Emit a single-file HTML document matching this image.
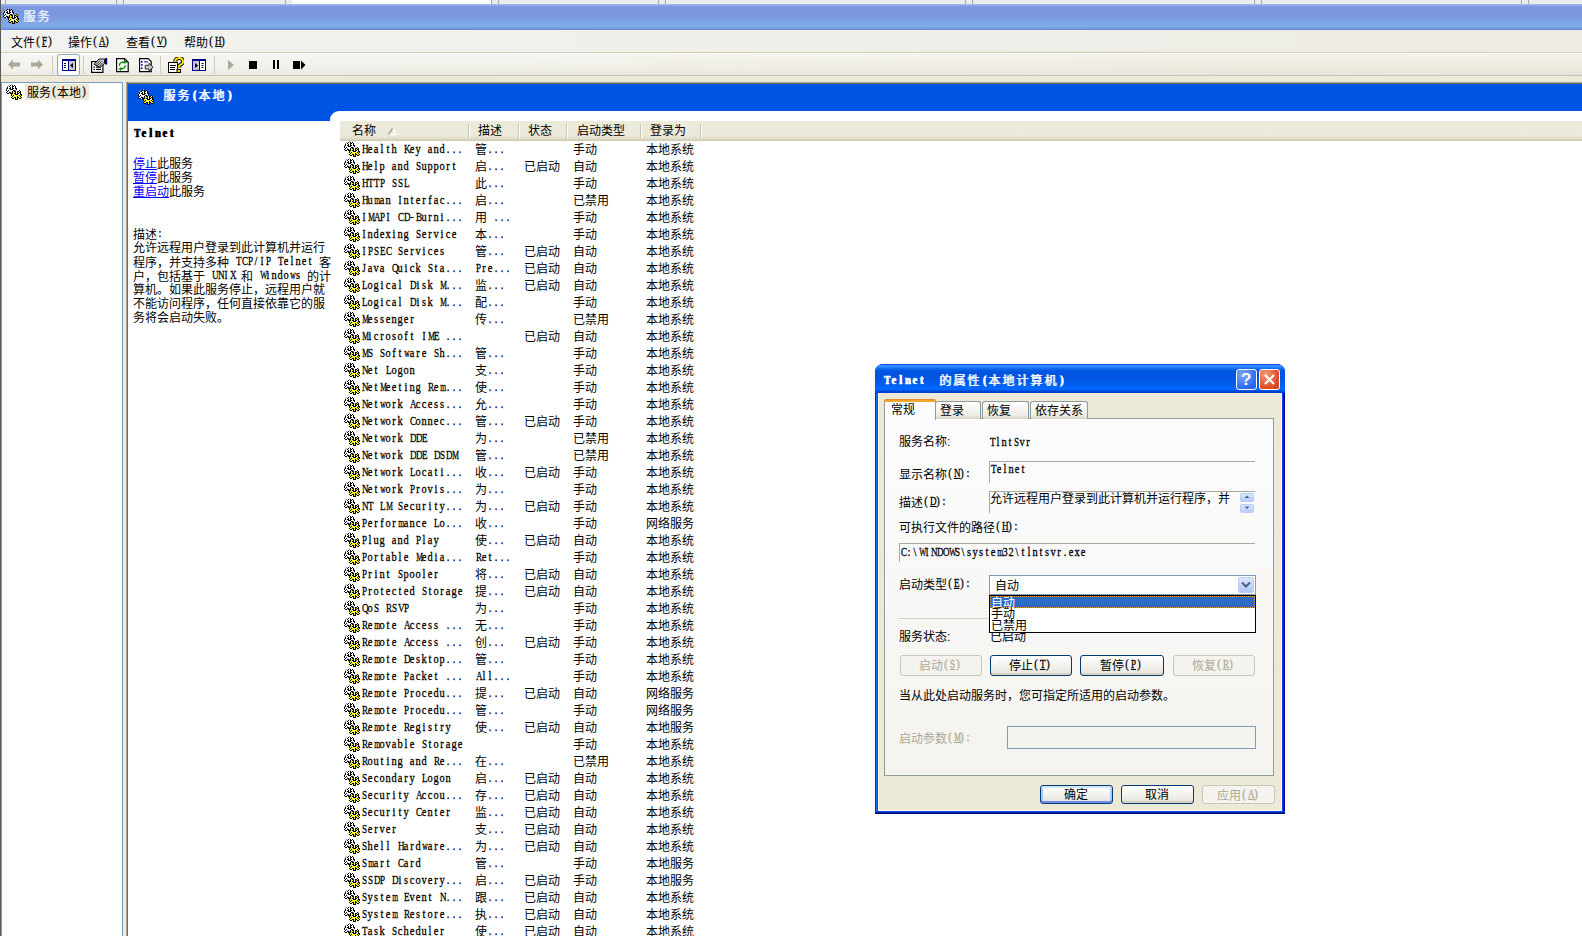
<!DOCTYPE html>
<html lang="zh-CN"><head><meta charset="utf-8"><title>服务</title><style>
*{margin:0;padding:0;box-sizing:border-box}
html,body{width:1582px;height:936px;overflow:hidden;background:#fff}
body{position:relative;font-family:"Liberation Sans",sans-serif;font-size:12px;line-height:14px;color:#000}
.a{position:absolute;white-space:nowrap}
i{font-style:normal;font-family:"Liberation Mono",monospace;font-size:12px;letter-spacing:-1.2px;vertical-align:1px}
b i,.bd i{letter-spacing:-0.2px}
.bd{letter-spacing:2px;text-shadow:1px 0 0}
.r i{vertical-align:0}
b i{font-weight:bold}
.g{position:absolute;display:block}
u{text-decoration:underline}
c{display:inline-block;width:6px;text-align:center;font-family:"Liberation Serif",serif;font-size:13px;letter-spacing:0;transform:scaleX(.8);-webkit-text-stroke-width:.3px;position:relative;top:-1px}
.bd c{width:7px;top:0;font-weight:bold}
c.u{transform:scaleX(.7)}
c.w{transform:scaleX(.58)}
</style></head><body>
<svg width="0" height="0" style="position:absolute"><defs><symbol id="gear" viewBox="0 0 16 16" shape-rendering="crispEdges"><rect x="5" y="0" width="1" height="1" fill="#A0A0A0"/><rect x="2" y="1" width="1" height="1" fill="#A0A0A0"/><rect x="4" y="1" width="1" height="1" fill="#000"/><rect x="6" y="1" width="1" height="1" fill="#000"/><rect x="8" y="1" width="1" height="1" fill="#000"/><rect x="1" y="2" width="1" height="1" fill="#A0A0A0"/><rect x="3" y="2" width="1" height="1" fill="#000"/><rect x="4" y="2" width="2" height="1" fill="#fff"/><rect x="6" y="2" width="2" height="1" fill="#000"/><rect x="8" y="2" width="1" height="1" fill="#fff"/><rect x="9" y="2" width="1" height="1" fill="#000"/><rect x="1" y="3" width="1" height="1" fill="#000"/><rect x="2" y="3" width="2" height="1" fill="#fff"/><rect x="4" y="3" width="1" height="1" fill="#000"/><rect x="5" y="3" width="1" height="1" fill="#fff"/><rect x="6" y="3" width="1" height="1" fill="#000"/><rect x="7" y="3" width="2" height="1" fill="#fff"/><rect x="9" y="3" width="1" height="1" fill="#000"/><rect x="0" y="4" width="1" height="1" fill="#A0A0A0"/><rect x="1" y="4" width="1" height="1" fill="#000"/><rect x="2" y="4" width="1" height="1" fill="#fff"/><rect x="3" y="4" width="2" height="1" fill="#000"/><rect x="5" y="4" width="1" height="1" fill="#fff"/><rect x="6" y="4" width="2" height="1" fill="#000"/><rect x="8" y="4" width="1" height="1" fill="#fff"/><rect x="9" y="4" width="2" height="1" fill="#000"/><rect x="0" y="5" width="1" height="1" fill="#000"/><rect x="1" y="5" width="3" height="1" fill="#fff"/><rect x="4" y="5" width="3" height="1" fill="#000"/><rect x="7" y="5" width="3" height="1" fill="#fff"/><rect x="10" y="5" width="1" height="1" fill="#000"/><rect x="0" y="6" width="1" height="1" fill="#000"/><rect x="1" y="6" width="1" height="1" fill="#fff"/><rect x="2" y="6" width="1" height="1" fill="#000"/><rect x="3" y="6" width="4" height="1" fill="#fff"/><rect x="7" y="6" width="2" height="1" fill="#000"/><rect x="9" y="6" width="1" height="1" fill="#A0A0A0"/><rect x="13" y="6" width="1" height="1" fill="#000"/><rect x="1" y="7" width="1" height="1" fill="#000"/><rect x="2" y="7" width="1" height="1" fill="#fff"/><rect x="3" y="7" width="1" height="1" fill="#A0A0A0"/><rect x="4" y="7" width="2" height="1" fill="#fff"/><rect x="6" y="7" width="1" height="1" fill="#000"/><rect x="7" y="7" width="1" height="1" fill="#F8F000"/><rect x="8" y="7" width="2" height="1" fill="#000"/><rect x="10" y="7" width="1" height="1" fill="#fff"/><rect x="11" y="7" width="2" height="1" fill="#000"/><rect x="13" y="7" width="1" height="1" fill="#F8F000"/><rect x="14" y="7" width="1" height="1" fill="#000"/><rect x="0" y="8" width="1" height="1" fill="#000"/><rect x="1" y="8" width="2" height="1" fill="#fff"/><rect x="3" y="8" width="2" height="1" fill="#000"/><rect x="5" y="8" width="1" height="1" fill="#A0A0A0"/><rect x="6" y="8" width="1" height="1" fill="#000"/><rect x="7" y="8" width="2" height="1" fill="#F8F000"/><rect x="9" y="8" width="1" height="1" fill="#000"/><rect x="10" y="8" width="1" height="1" fill="#fff"/><rect x="11" y="8" width="1" height="1" fill="#000"/><rect x="12" y="8" width="1" height="1" fill="#F8F000"/><rect x="13" y="8" width="2" height="1" fill="#000"/><rect x="1" y="9" width="2" height="1" fill="#000"/><rect x="3" y="9" width="1" height="1" fill="#fff"/><rect x="4" y="9" width="3" height="1" fill="#000"/><rect x="7" y="9" width="1" height="1" fill="#F8F000"/><rect x="8" y="9" width="2" height="1" fill="#000"/><rect x="10" y="9" width="1" height="1" fill="#fff"/><rect x="11" y="9" width="2" height="1" fill="#000"/><rect x="13" y="9" width="1" height="1" fill="#fff"/><rect x="14" y="9" width="1" height="1" fill="#000"/><rect x="5" y="10" width="1" height="1" fill="#000"/><rect x="6" y="10" width="2" height="1" fill="#F8F000"/><rect x="8" y="10" width="1" height="1" fill="#fff"/><rect x="9" y="10" width="3" height="1" fill="#000"/><rect x="12" y="10" width="1" height="1" fill="#fff"/><rect x="13" y="10" width="1" height="1" fill="#F8F000"/><rect x="14" y="10" width="2" height="1" fill="#000"/><rect x="5" y="11" width="1" height="1" fill="#000"/><rect x="6" y="11" width="1" height="1" fill="#F8F000"/><rect x="7" y="11" width="1" height="1" fill="#000"/><rect x="8" y="11" width="1" height="1" fill="#F8F000"/><rect x="9" y="11" width="1" height="1" fill="#fff"/><rect x="10" y="11" width="1" height="1" fill="#F8F000"/><rect x="11" y="11" width="1" height="1" fill="#fff"/><rect x="12" y="11" width="1" height="1" fill="#F8F000"/><rect x="13" y="11" width="1" height="1" fill="#000"/><rect x="14" y="11" width="1" height="1" fill="#F8F000"/><rect x="15" y="11" width="1" height="1" fill="#000"/><rect x="6" y="12" width="1" height="1" fill="#000"/><rect x="7" y="12" width="3" height="1" fill="#F8F000"/><rect x="10" y="12" width="1" height="1" fill="#fff"/><rect x="11" y="12" width="1" height="1" fill="#000"/><rect x="12" y="12" width="2" height="1" fill="#F8F000"/><rect x="14" y="12" width="1" height="1" fill="#000"/><rect x="5" y="13" width="1" height="1" fill="#000"/><rect x="6" y="13" width="2" height="1" fill="#F8F000"/><rect x="8" y="13" width="2" height="1" fill="#000"/><rect x="10" y="13" width="1" height="1" fill="#F8F000"/><rect x="11" y="13" width="2" height="1" fill="#000"/><rect x="13" y="13" width="2" height="1" fill="#F8F000"/><rect x="15" y="13" width="1" height="1" fill="#000"/><rect x="6" y="14" width="2" height="1" fill="#000"/><rect x="9" y="14" width="1" height="1" fill="#000"/><rect x="10" y="14" width="1" height="1" fill="#F8F000"/><rect x="11" y="14" width="1" height="1" fill="#000"/><rect x="13" y="14" width="2" height="1" fill="#000"/><rect x="9" y="15" width="3" height="1" fill="#000"/></symbol></defs></svg>
<div class="a" style="left:0;top:0;width:1582px;height:4px;background:#EBEBEB"></div>
<div class="a" style="left:292px;top:0;width:199px;height:4px;background:#fff"></div>
<div class="a" style="left:5px;top:0;width:1px;height:4px;background:#A8A8A8"></div>
<div class="a" style="left:116px;top:0;width:1px;height:4px;background:#A8A8A8"></div>
<div class="a" style="left:123px;top:0;width:1px;height:4px;background:#A8A8A8"></div>
<div class="a" style="left:285px;top:0;width:1px;height:4px;background:#A8A8A8"></div>
<div class="a" style="left:491px;top:0;width:1px;height:4px;background:#A8A8A8"></div>
<div class="a" style="left:498px;top:0;width:1px;height:4px;background:#A8A8A8"></div>
<div class="a" style="left:658px;top:0;width:1px;height:4px;background:#A8A8A8"></div>
<div class="a" style="left:665px;top:0;width:1px;height:4px;background:#A8A8A8"></div>
<div class="a" style="left:965px;top:0;width:1px;height:4px;background:#A8A8A8"></div>
<div class="a" style="left:972px;top:0;width:1px;height:4px;background:#A8A8A8"></div>
<div class="a" style="left:1254px;top:0;width:1px;height:4px;background:#A8A8A8"></div>
<div class="a" style="left:1261px;top:0;width:1px;height:4px;background:#A8A8A8"></div>
<div class="a" style="left:1521px;top:0;width:1px;height:4px;background:#A8A8A8"></div>
<div class="a" style="left:1528px;top:0;width:1px;height:4px;background:#A8A8A8"></div>
<div class="a" style="left:0;top:4px;width:1582px;height:26px;background:linear-gradient(#A6BDEE 0px,#94AEE8 1px,#7C98DF 3px,#7A97DE 12px,#7FA7E6 19px,#80ABE8 23px,#6E8DDA 25px,#6A88D8 26px)"></div>
<svg class="g" style="left:3px;top:8px" width="16" height="16" viewBox="0 0 16 16"><use href="#gear"/></svg>
<div class="a bd" style="left:23px;top:10px;color:#E6EDFA">服务</div>
<div class="a" style="left:0;top:30px;width:1582px;height:22px;background:linear-gradient(90deg,#F2F2F0,#EDEBE3)"></div>
<div class="a" style="left:11px;top:35px">文件<i><c>(</c><c class=u><u>F</u></c><c>)</c></i></div>
<div class="a" style="left:68px;top:35px">操作<i><c>(</c><c class=u><u>A</u></c><c>)</c></i></div>
<div class="a" style="left:126px;top:35px">查看<i><c>(</c><c class=u><u>V</u></c><c>)</c></i></div>
<div class="a" style="left:184px;top:35px">帮助<i><c>(</c><c class=u><u>H</u></c><c>)</c></i></div>
<div class="a" style="left:0;top:52px;width:1582px;height:1px;background:#D5CDB5"></div>
<div class="a" style="left:0;top:53px;width:1582px;height:1px;background:#FFFFFF"></div>
<div class="a" style="left:0;top:54px;width:1582px;height:21px;background:linear-gradient(rgba(255,255,255,.35),rgba(255,255,255,0) 70%,rgba(0,0,0,.03)),linear-gradient(90deg,#F2F1EC,#ECE9DD)"></div>
<div class="a" style="left:0;top:75px;width:1582px;height:1px;background:#C9C4B0"></div>
<div class="a" style="left:0;top:76px;width:1582px;height:6px;background:#ECE9D8"></div>
<div class="a" style="left:0;top:0;width:1px;height:936px;background:#5A5A5A"></div>
<svg class="g" style="left:8px;top:59px" width="12" height="11" viewBox="0 0 12 11"><path d="M0 5.5L5 0.5V3.5H12V7.5H5V10.5Z" fill="#ACA899"/></svg>
<svg class="g" style="left:31px;top:59px" width="12" height="11" viewBox="0 0 12 11"><path d="M12 5.5L7 0.5V3.5H0V7.5H7V10.5Z" fill="#ACA899"/></svg>
<div class="a" style="left:52px;top:56px;width:1px;height:18px;background:#D1CCB8"></div>
<div class="a" style="left:83px;top:56px;width:1px;height:18px;background:#D1CCB8"></div>
<div class="a" style="left:160px;top:56px;width:1px;height:18px;background:#D1CCB8"></div>
<div class="a" style="left:214px;top:56px;width:1px;height:18px;background:#D1CCB8"></div>
<div class="a" style="left:57px;top:54px;width:23px;height:22px;background:#fff;border:1px solid #8FA8C9;border-radius:3px"></div>
<svg class="g" style="left:62px;top:59px" width="14" height="12" viewBox="0 0 14 12"><rect x="0.5" y="0.5" width="13" height="11" fill="#C8C8C8" stroke="#00008B" stroke-width="1"/><rect x="1" y="2" width="5" height="9" fill="#fff"/><rect x="0" y="0" width="14" height="2" fill="#00008B"/><rect x="6" y="2" width="1" height="9" fill="#00008B"/><rect x="2" y="4" width="2" height="1" fill="#000"/><rect x="2" y="6" width="2" height="1" fill="#000"/><rect x="2" y="8" width="2" height="1" fill="#000"/><path d="M8 6.5L11 4V9Z" fill="#000"/></svg>
<svg class="g" style="left:91px;top:57px" width="17" height="16" viewBox="0 0 17 16"><rect x="0.6" y="4.6" width="11.3" height="10.8" fill="#fff" stroke="#000" stroke-width="1.2"/><rect x="2.5" y="9.5" width="1.5" height="1.2" fill="#000"/><rect x="5" y="9.5" width="5" height="1.2" fill="#000"/><rect x="2.5" y="11.8" width="1.5" height="1.2" fill="#000"/><rect x="5" y="11.8" width="5" height="1.2" fill="#000"/><path d="M3 7.2L8 2H13.5V6.5L9 10.5Z" fill="#C8C8C8" stroke="#000" stroke-width="0.9"/><path d="M4.5 8L9 3.5M6 9L10.5 4.5M7.5 10L12 5.5" stroke="#000" stroke-width="0.7"/><rect x="14" y="1" width="2.2" height="6.5" fill="#000080"/></svg>
<svg class="g" style="left:116px;top:58px" width="13" height="15" viewBox="0 0 13 15"><path d="M0.6 0.6H8.5L12.2 4.3V13.6H0.6Z" fill="#fff" stroke="#000" stroke-width="1.2"/><path d="M8.5 0.6V3.5H12" fill="none" stroke="#000" stroke-width=".8"/><path d="M3.6 7.8A2.8 2.8 0 0 1 8 4.9M9.2 7.2A2.8 2.8 0 0 1 4.8 10" fill="none" stroke="#008A00" stroke-width="1.3"/><path d="M7 3.5h1.4v-1h1v1h1.2v1.2h-1.2v1h-1v-1H7z M2.6 10.5h1.3v-1h1v1h1.2v1.2H4.9v1h-1v-1H2.6z" fill="#008A00"/></svg>
<svg class="g" style="left:139px;top:58px" width="15" height="15" viewBox="0 0 15 15"><path d="M0.6 0.6H9.2L12.2 3.6V13.6H0.6Z" fill="#fff" stroke="#000" stroke-width="1.2"/><rect x="2" y="3" width="1.6" height="1.6" fill="#0000A0"/><rect x="2" y="6.2" width="1.6" height="1.6" fill="#0000A0"/><rect x="2" y="9.4" width="1.6" height="1.6" fill="#0000A0"/><rect x="5" y="3.4" width="4" height="1" fill="#0000A0"/><path d="M6.2 7.3H10V5.3L14.2 9.2L10 13.1V11.1H6.2Z" fill="#C8C8C8" stroke="#000" stroke-width=".8"/></svg>
<svg class="g" style="left:168px;top:57px" width="16" height="16" viewBox="0 0 16 16"><rect x="0.5" y="5.5" width="9" height="10" fill="#fff" stroke="#000"/><rect x="2" y="8" width="6" height="1" fill="#000"/><rect x="2" y="10" width="5" height="1" fill="#000"/><rect x="2" y="12" width="5" height="1" fill="#000"/><path d="M7.2 4.6A3.9 3.4 0 1 1 12.6 7.6C11.2 8.6 10.6 9.2 10.6 10.8" fill="none" stroke="#000" stroke-width="3.8"/><path d="M7.2 4.6A3.9 3.4 0 1 1 12.6 7.6C11.2 8.6 10.6 9.2 10.6 10.8" fill="none" stroke="#FFE800" stroke-width="1.9"/><rect x="9" y="12.5" width="3.5" height="3" fill="#FFE800" stroke="#000" stroke-width="1"/></svg>
<svg class="g" style="left:192px;top:59px" width="14" height="12" viewBox="0 0 14 12"><rect x="0.5" y="0.5" width="13" height="11" fill="#fff" stroke="#00008B"/><rect x="0" y="0" width="14" height="2" fill="#00008B"/><rect x="1" y="2" width="6" height="9" fill="#C8C8C8"/><rect x="7" y="2" width="1" height="9" fill="#00008B"/><path d="M3 4V9L6 6.5Z" fill="#000"/><rect x="9.5" y="4" width="2" height="1" fill="#000"/><rect x="9.5" y="6" width="2" height="1" fill="#000"/><rect x="9.5" y="8" width="2" height="1" fill="#000"/></svg>
<svg class="g" style="left:228px;top:60px" width="6" height="10" viewBox="0 0 6 10"><path d="M0 0L6 5L0 10Z" fill="#ACA899"/></svg>
<div class="a" style="left:249px;top:61px;width:8px;height:8px;background:#000"></div>
<div class="a" style="left:273px;top:60px;width:2px;height:9px;background:#000"></div>
<div class="a" style="left:277px;top:60px;width:2px;height:9px;background:#000"></div>
<div class="a" style="left:293px;top:61px;width:7px;height:8px;background:#000"></div>
<svg class="g" style="left:301px;top:60px" width="5" height="10" viewBox="0 0 5 10"><path d="M0 0.5L4.5 5L0 9.5Z" fill="#000"/></svg>
<div class="a" style="left:1px;top:82px;width:122px;height:854px;background:#fff;border-left:1px solid #7F9DB9;border-top:1px solid #7F9DB9;border-right:1px solid #7F9DB9"></div>
<svg class="g" style="left:6px;top:84px" width="16" height="16" viewBox="0 0 16 16"><use href="#gear"/></svg>
<div class="a" style="left:25px;top:84px;width:64px;height:16px;background:#ECE9D8"></div>
<div class="a" style="left:27px;top:85px">服务<i><c>(</c></i>本地<i><c>)</c></i></div>
<div class="a" style="left:123px;top:82px;width:3px;height:854px;background:#EFECDD"></div>
<div class="a" style="left:126px;top:82px;width:1px;height:854px;background:#A9A58F"></div>
<div class="a" style="left:127px;top:82px;width:1455px;height:1px;background:#A9A58F"></div>
<div class="a" style="left:127px;top:82px;width:1px;height:854px;background:#716F64"></div>
<div class="a" style="left:128px;top:83px;width:1454px;height:1px;background:#716F64"></div>
<div class="a" style="left:128px;top:84px;width:1454px;height:37px;background:#0054E3"></div>
<div class="a" style="left:330px;top:111px;width:1252px;height:12px;background:#fff;border-top-left-radius:9px"></div>
<svg class="g" style="left:138px;top:89px" width="16" height="16" viewBox="0 0 16 16"><use href="#gear"/></svg>
<div class="a bd" style="left:163px;top:88px;color:#fff">服务<i><c>(</c></i>本地<i><c>)</c></i></div>
<div class="a bd" style="left:133px;top:126px"><i><c class=u>T</c><c>e</c><c>l</c><c>n</c><c>e</c><c>t</c></i></div>
<div class="a" style="left:133px;top:157px"><u style="color:#0000FF">停止</u>此服务</div>
<div class="a" style="left:133px;top:171px"><u style="color:#0000FF">暂停</u>此服务</div>
<div class="a" style="left:133px;top:185px"><u style="color:#0000FF">重启动</u>此服务</div>
<div class="a" style="left:133px;top:227px">描述<i><c>:</c></i></div>
<div class="a" style="left:133px;top:241px">允许远程用户登录到此计算机并运行</div>
<div class="a" style="left:133px;top:255px">程序，并支持多种<i><c>&nbsp;</c><c class=u>T</c><c class=u>C</c><c class=u>P</c><c>/</c><c class=u>I</c><c class=u>P</c><c>&nbsp;</c><c class=u>T</c><c>e</c><c>l</c><c>n</c><c>e</c><c>t</c><c>&nbsp;</c></i>客</div>
<div class="a" style="left:133px;top:269px">户，包括基于<i><c>&nbsp;</c><c class=u>U</c><c class=u>N</c><c class=u>I</c><c class=u>X</c><c>&nbsp;</c></i>和<i><c>&nbsp;</c><c class=w>W</c><c>i</c><c>n</c><c>d</c><c>o</c><c class=w>w</c><c>s</c><c>&nbsp;</c></i>的计</div>
<div class="a" style="left:133px;top:283px">算机。如果此服务停止，远程用户就</div>
<div class="a" style="left:133px;top:297px">不能访问程序，任何直接依靠它的服</div>
<div class="a" style="left:133px;top:311px">务将会启动失败。</div>
<div class="a" style="left:340px;top:121px;width:1242px;height:20px;background:linear-gradient(#EBEADB 0,#EBE9DA 15px,#E2DFCD 17px,#D6D2BD 19px,#CBC7B1 20px)"></div>
<div class="a" style="left:468px;top:124px;width:1px;height:14px;background:#C7C5B2"></div>
<div class="a" style="left:469px;top:124px;width:1px;height:14px;background:#FFFFFF"></div>
<div class="a" style="left:518px;top:124px;width:1px;height:14px;background:#C7C5B2"></div>
<div class="a" style="left:519px;top:124px;width:1px;height:14px;background:#FFFFFF"></div>
<div class="a" style="left:566px;top:124px;width:1px;height:14px;background:#C7C5B2"></div>
<div class="a" style="left:567px;top:124px;width:1px;height:14px;background:#FFFFFF"></div>
<div class="a" style="left:640px;top:124px;width:1px;height:14px;background:#C7C5B2"></div>
<div class="a" style="left:641px;top:124px;width:1px;height:14px;background:#FFFFFF"></div>
<div class="a" style="left:700px;top:124px;width:1px;height:14px;background:#C7C5B2"></div>
<div class="a" style="left:701px;top:124px;width:1px;height:14px;background:#FFFFFF"></div>
<div class="a" style="left:352px;top:124px">名称</div>
<div class="a" style="left:478px;top:124px">描述</div>
<div class="a" style="left:528px;top:124px">状态</div>
<div class="a" style="left:577px;top:124px">启动类型</div>
<div class="a" style="left:650px;top:124px">登录为</div>
<svg class="g" style="left:388px;top:128px" width="9" height="7" viewBox="0 0 9 7"><path d="M8.5 6.5L4.5 0.5" stroke="#fff" stroke-width="1.2"/><path d="M0.5 6.5H8.5" stroke="#fff" stroke-width="1.2"/><path d="M0.5 6.5L4.5 0.5" stroke="#8F8B79" stroke-width="1.2"/></svg>
<svg class="g" style="left:344px;top:141px" width="16" height="16" viewBox="0 0 16 16"><use href="#gear"/></svg>
<div class="a r" style="left:361px;top:143px"><i><c class=u>H</c><c>e</c><c>a</c><c>l</c><c>t</c><c>h</c><c>&nbsp;</c><c class=u>K</c><c>e</c><c>y</c><c>&nbsp;</c><c>a</c><c>n</c><c>d</c><c>.</c><c>.</c><c>.</c></i></div>
<div class="a r" style="left:475px;top:143px">管<i><c>.</c><c>.</c><c>.</c></i></div>
<div class="a r" style="left:573px;top:143px">手动</div>
<div class="a r" style="left:646px;top:143px">本地系统</div>
<svg class="g" style="left:344px;top:158px" width="16" height="16" viewBox="0 0 16 16"><use href="#gear"/></svg>
<div class="a r" style="left:361px;top:160px"><i><c class=u>H</c><c>e</c><c>l</c><c>p</c><c>&nbsp;</c><c>a</c><c>n</c><c>d</c><c>&nbsp;</c><c class=u>S</c><c>u</c><c>p</c><c>p</c><c>o</c><c>r</c><c>t</c></i></div>
<div class="a r" style="left:475px;top:160px">启<i><c>.</c><c>.</c><c>.</c></i></div>
<div class="a r" style="left:524px;top:160px">已启动</div>
<div class="a r" style="left:573px;top:160px">自动</div>
<div class="a r" style="left:646px;top:160px">本地系统</div>
<svg class="g" style="left:344px;top:175px" width="16" height="16" viewBox="0 0 16 16"><use href="#gear"/></svg>
<div class="a r" style="left:361px;top:177px"><i><c class=u>H</c><c class=u>T</c><c class=u>T</c><c class=u>P</c><c>&nbsp;</c><c class=u>S</c><c class=u>S</c><c class=u>L</c></i></div>
<div class="a r" style="left:475px;top:177px">此<i><c>.</c><c>.</c><c>.</c></i></div>
<div class="a r" style="left:573px;top:177px">手动</div>
<div class="a r" style="left:646px;top:177px">本地系统</div>
<svg class="g" style="left:344px;top:192px" width="16" height="16" viewBox="0 0 16 16"><use href="#gear"/></svg>
<div class="a r" style="left:361px;top:194px"><i><c class=u>H</c><c>u</c><c class=w>m</c><c>a</c><c>n</c><c>&nbsp;</c><c class=u>I</c><c>n</c><c>t</c><c>e</c><c>r</c><c>f</c><c>a</c><c>c</c><c>.</c><c>.</c><c>.</c></i></div>
<div class="a r" style="left:475px;top:194px">启<i><c>.</c><c>.</c><c>.</c></i></div>
<div class="a r" style="left:573px;top:194px">已禁用</div>
<div class="a r" style="left:646px;top:194px">本地系统</div>
<svg class="g" style="left:344px;top:209px" width="16" height="16" viewBox="0 0 16 16"><use href="#gear"/></svg>
<div class="a r" style="left:361px;top:211px"><i><c class=u>I</c><c class=w>M</c><c class=u>A</c><c class=u>P</c><c class=u>I</c><c>&nbsp;</c><c class=u>C</c><c class=u>D</c><c>-</c><c class=u>B</c><c>u</c><c>r</c><c>n</c><c>i</c><c>.</c><c>.</c><c>.</c></i></div>
<div class="a r" style="left:475px;top:211px">用<i><c>&nbsp;</c><c>.</c><c>.</c><c>.</c></i></div>
<div class="a r" style="left:573px;top:211px">手动</div>
<div class="a r" style="left:646px;top:211px">本地系统</div>
<svg class="g" style="left:344px;top:226px" width="16" height="16" viewBox="0 0 16 16"><use href="#gear"/></svg>
<div class="a r" style="left:361px;top:228px"><i><c class=u>I</c><c>n</c><c>d</c><c>e</c><c>x</c><c>i</c><c>n</c><c>g</c><c>&nbsp;</c><c class=u>S</c><c>e</c><c>r</c><c>v</c><c>i</c><c>c</c><c>e</c></i></div>
<div class="a r" style="left:475px;top:228px">本<i><c>.</c><c>.</c><c>.</c></i></div>
<div class="a r" style="left:573px;top:228px">手动</div>
<div class="a r" style="left:646px;top:228px">本地系统</div>
<svg class="g" style="left:344px;top:243px" width="16" height="16" viewBox="0 0 16 16"><use href="#gear"/></svg>
<div class="a r" style="left:361px;top:245px"><i><c class=u>I</c><c class=u>P</c><c class=u>S</c><c class=u>E</c><c class=u>C</c><c>&nbsp;</c><c class=u>S</c><c>e</c><c>r</c><c>v</c><c>i</c><c>c</c><c>e</c><c>s</c></i></div>
<div class="a r" style="left:475px;top:245px">管<i><c>.</c><c>.</c><c>.</c></i></div>
<div class="a r" style="left:524px;top:245px">已启动</div>
<div class="a r" style="left:573px;top:245px">自动</div>
<div class="a r" style="left:646px;top:245px">本地系统</div>
<svg class="g" style="left:344px;top:260px" width="16" height="16" viewBox="0 0 16 16"><use href="#gear"/></svg>
<div class="a r" style="left:361px;top:262px"><i><c class=u>J</c><c>a</c><c>v</c><c>a</c><c>&nbsp;</c><c class=u>Q</c><c>u</c><c>i</c><c>c</c><c>k</c><c>&nbsp;</c><c class=u>S</c><c>t</c><c>a</c><c>.</c><c>.</c><c>.</c></i></div>
<div class="a r" style="left:475px;top:262px"><i><c class=u>P</c><c>r</c><c>e</c><c>.</c><c>.</c><c>.</c></i></div>
<div class="a r" style="left:524px;top:262px">已启动</div>
<div class="a r" style="left:573px;top:262px">自动</div>
<div class="a r" style="left:646px;top:262px">本地系统</div>
<svg class="g" style="left:344px;top:277px" width="16" height="16" viewBox="0 0 16 16"><use href="#gear"/></svg>
<div class="a r" style="left:361px;top:279px"><i><c class=u>L</c><c>o</c><c>g</c><c>i</c><c>c</c><c>a</c><c>l</c><c>&nbsp;</c><c class=u>D</c><c>i</c><c>s</c><c>k</c><c>&nbsp;</c><c class=w>M</c><c>.</c><c>.</c><c>.</c></i></div>
<div class="a r" style="left:475px;top:279px">监<i><c>.</c><c>.</c><c>.</c></i></div>
<div class="a r" style="left:524px;top:279px">已启动</div>
<div class="a r" style="left:573px;top:279px">自动</div>
<div class="a r" style="left:646px;top:279px">本地系统</div>
<svg class="g" style="left:344px;top:294px" width="16" height="16" viewBox="0 0 16 16"><use href="#gear"/></svg>
<div class="a r" style="left:361px;top:296px"><i><c class=u>L</c><c>o</c><c>g</c><c>i</c><c>c</c><c>a</c><c>l</c><c>&nbsp;</c><c class=u>D</c><c>i</c><c>s</c><c>k</c><c>&nbsp;</c><c class=w>M</c><c>.</c><c>.</c><c>.</c></i></div>
<div class="a r" style="left:475px;top:296px">配<i><c>.</c><c>.</c><c>.</c></i></div>
<div class="a r" style="left:573px;top:296px">手动</div>
<div class="a r" style="left:646px;top:296px">本地系统</div>
<svg class="g" style="left:344px;top:311px" width="16" height="16" viewBox="0 0 16 16"><use href="#gear"/></svg>
<div class="a r" style="left:361px;top:313px"><i><c class=w>M</c><c>e</c><c>s</c><c>s</c><c>e</c><c>n</c><c>g</c><c>e</c><c>r</c></i></div>
<div class="a r" style="left:475px;top:313px">传<i><c>.</c><c>.</c><c>.</c></i></div>
<div class="a r" style="left:573px;top:313px">已禁用</div>
<div class="a r" style="left:646px;top:313px">本地系统</div>
<svg class="g" style="left:344px;top:328px" width="16" height="16" viewBox="0 0 16 16"><use href="#gear"/></svg>
<div class="a r" style="left:361px;top:330px"><i><c class=w>M</c><c>i</c><c>c</c><c>r</c><c>o</c><c>s</c><c>o</c><c>f</c><c>t</c><c>&nbsp;</c><c class=u>I</c><c class=w>M</c><c class=u>E</c><c>&nbsp;</c><c>.</c><c>.</c><c>.</c></i></div>
<div class="a r" style="left:524px;top:330px">已启动</div>
<div class="a r" style="left:573px;top:330px">自动</div>
<div class="a r" style="left:646px;top:330px">本地系统</div>
<svg class="g" style="left:344px;top:345px" width="16" height="16" viewBox="0 0 16 16"><use href="#gear"/></svg>
<div class="a r" style="left:361px;top:347px"><i><c class=w>M</c><c class=u>S</c><c>&nbsp;</c><c class=u>S</c><c>o</c><c>f</c><c>t</c><c class=w>w</c><c>a</c><c>r</c><c>e</c><c>&nbsp;</c><c class=u>S</c><c>h</c><c>.</c><c>.</c><c>.</c></i></div>
<div class="a r" style="left:475px;top:347px">管<i><c>.</c><c>.</c><c>.</c></i></div>
<div class="a r" style="left:573px;top:347px">手动</div>
<div class="a r" style="left:646px;top:347px">本地系统</div>
<svg class="g" style="left:344px;top:362px" width="16" height="16" viewBox="0 0 16 16"><use href="#gear"/></svg>
<div class="a r" style="left:361px;top:364px"><i><c class=u>N</c><c>e</c><c>t</c><c>&nbsp;</c><c class=u>L</c><c>o</c><c>g</c><c>o</c><c>n</c></i></div>
<div class="a r" style="left:475px;top:364px">支<i><c>.</c><c>.</c><c>.</c></i></div>
<div class="a r" style="left:573px;top:364px">手动</div>
<div class="a r" style="left:646px;top:364px">本地系统</div>
<svg class="g" style="left:344px;top:379px" width="16" height="16" viewBox="0 0 16 16"><use href="#gear"/></svg>
<div class="a r" style="left:361px;top:381px"><i><c class=u>N</c><c>e</c><c>t</c><c class=w>M</c><c>e</c><c>e</c><c>t</c><c>i</c><c>n</c><c>g</c><c>&nbsp;</c><c class=u>R</c><c>e</c><c class=w>m</c><c>.</c><c>.</c><c>.</c></i></div>
<div class="a r" style="left:475px;top:381px">使<i><c>.</c><c>.</c><c>.</c></i></div>
<div class="a r" style="left:573px;top:381px">手动</div>
<div class="a r" style="left:646px;top:381px">本地系统</div>
<svg class="g" style="left:344px;top:396px" width="16" height="16" viewBox="0 0 16 16"><use href="#gear"/></svg>
<div class="a r" style="left:361px;top:398px"><i><c class=u>N</c><c>e</c><c>t</c><c class=w>w</c><c>o</c><c>r</c><c>k</c><c>&nbsp;</c><c class=u>A</c><c>c</c><c>c</c><c>e</c><c>s</c><c>s</c><c>.</c><c>.</c><c>.</c></i></div>
<div class="a r" style="left:475px;top:398px">允<i><c>.</c><c>.</c><c>.</c></i></div>
<div class="a r" style="left:573px;top:398px">手动</div>
<div class="a r" style="left:646px;top:398px">本地系统</div>
<svg class="g" style="left:344px;top:413px" width="16" height="16" viewBox="0 0 16 16"><use href="#gear"/></svg>
<div class="a r" style="left:361px;top:415px"><i><c class=u>N</c><c>e</c><c>t</c><c class=w>w</c><c>o</c><c>r</c><c>k</c><c>&nbsp;</c><c class=u>C</c><c>o</c><c>n</c><c>n</c><c>e</c><c>c</c><c>.</c><c>.</c><c>.</c></i></div>
<div class="a r" style="left:475px;top:415px">管<i><c>.</c><c>.</c><c>.</c></i></div>
<div class="a r" style="left:524px;top:415px">已启动</div>
<div class="a r" style="left:573px;top:415px">手动</div>
<div class="a r" style="left:646px;top:415px">本地系统</div>
<svg class="g" style="left:344px;top:430px" width="16" height="16" viewBox="0 0 16 16"><use href="#gear"/></svg>
<div class="a r" style="left:361px;top:432px"><i><c class=u>N</c><c>e</c><c>t</c><c class=w>w</c><c>o</c><c>r</c><c>k</c><c>&nbsp;</c><c class=u>D</c><c class=u>D</c><c class=u>E</c></i></div>
<div class="a r" style="left:475px;top:432px">为<i><c>.</c><c>.</c><c>.</c></i></div>
<div class="a r" style="left:573px;top:432px">已禁用</div>
<div class="a r" style="left:646px;top:432px">本地系统</div>
<svg class="g" style="left:344px;top:447px" width="16" height="16" viewBox="0 0 16 16"><use href="#gear"/></svg>
<div class="a r" style="left:361px;top:449px"><i><c class=u>N</c><c>e</c><c>t</c><c class=w>w</c><c>o</c><c>r</c><c>k</c><c>&nbsp;</c><c class=u>D</c><c class=u>D</c><c class=u>E</c><c>&nbsp;</c><c class=u>D</c><c class=u>S</c><c class=u>D</c><c class=w>M</c></i></div>
<div class="a r" style="left:475px;top:449px">管<i><c>.</c><c>.</c><c>.</c></i></div>
<div class="a r" style="left:573px;top:449px">已禁用</div>
<div class="a r" style="left:646px;top:449px">本地系统</div>
<svg class="g" style="left:344px;top:464px" width="16" height="16" viewBox="0 0 16 16"><use href="#gear"/></svg>
<div class="a r" style="left:361px;top:466px"><i><c class=u>N</c><c>e</c><c>t</c><c class=w>w</c><c>o</c><c>r</c><c>k</c><c>&nbsp;</c><c class=u>L</c><c>o</c><c>c</c><c>a</c><c>t</c><c>i</c><c>.</c><c>.</c><c>.</c></i></div>
<div class="a r" style="left:475px;top:466px">收<i><c>.</c><c>.</c><c>.</c></i></div>
<div class="a r" style="left:524px;top:466px">已启动</div>
<div class="a r" style="left:573px;top:466px">手动</div>
<div class="a r" style="left:646px;top:466px">本地系统</div>
<svg class="g" style="left:344px;top:481px" width="16" height="16" viewBox="0 0 16 16"><use href="#gear"/></svg>
<div class="a r" style="left:361px;top:483px"><i><c class=u>N</c><c>e</c><c>t</c><c class=w>w</c><c>o</c><c>r</c><c>k</c><c>&nbsp;</c><c class=u>P</c><c>r</c><c>o</c><c>v</c><c>i</c><c>s</c><c>.</c><c>.</c><c>.</c></i></div>
<div class="a r" style="left:475px;top:483px">为<i><c>.</c><c>.</c><c>.</c></i></div>
<div class="a r" style="left:573px;top:483px">手动</div>
<div class="a r" style="left:646px;top:483px">本地系统</div>
<svg class="g" style="left:344px;top:498px" width="16" height="16" viewBox="0 0 16 16"><use href="#gear"/></svg>
<div class="a r" style="left:361px;top:500px"><i><c class=u>N</c><c class=u>T</c><c>&nbsp;</c><c class=u>L</c><c class=w>M</c><c>&nbsp;</c><c class=u>S</c><c>e</c><c>c</c><c>u</c><c>r</c><c>i</c><c>t</c><c>y</c><c>.</c><c>.</c><c>.</c></i></div>
<div class="a r" style="left:475px;top:500px">为<i><c>.</c><c>.</c><c>.</c></i></div>
<div class="a r" style="left:524px;top:500px">已启动</div>
<div class="a r" style="left:573px;top:500px">手动</div>
<div class="a r" style="left:646px;top:500px">本地系统</div>
<svg class="g" style="left:344px;top:515px" width="16" height="16" viewBox="0 0 16 16"><use href="#gear"/></svg>
<div class="a r" style="left:361px;top:517px"><i><c class=u>P</c><c>e</c><c>r</c><c>f</c><c>o</c><c>r</c><c class=w>m</c><c>a</c><c>n</c><c>c</c><c>e</c><c>&nbsp;</c><c class=u>L</c><c>o</c><c>.</c><c>.</c><c>.</c></i></div>
<div class="a r" style="left:475px;top:517px">收<i><c>.</c><c>.</c><c>.</c></i></div>
<div class="a r" style="left:573px;top:517px">手动</div>
<div class="a r" style="left:646px;top:517px">网络服务</div>
<svg class="g" style="left:344px;top:532px" width="16" height="16" viewBox="0 0 16 16"><use href="#gear"/></svg>
<div class="a r" style="left:361px;top:534px"><i><c class=u>P</c><c>l</c><c>u</c><c>g</c><c>&nbsp;</c><c>a</c><c>n</c><c>d</c><c>&nbsp;</c><c class=u>P</c><c>l</c><c>a</c><c>y</c></i></div>
<div class="a r" style="left:475px;top:534px">使<i><c>.</c><c>.</c><c>.</c></i></div>
<div class="a r" style="left:524px;top:534px">已启动</div>
<div class="a r" style="left:573px;top:534px">自动</div>
<div class="a r" style="left:646px;top:534px">本地系统</div>
<svg class="g" style="left:344px;top:549px" width="16" height="16" viewBox="0 0 16 16"><use href="#gear"/></svg>
<div class="a r" style="left:361px;top:551px"><i><c class=u>P</c><c>o</c><c>r</c><c>t</c><c>a</c><c>b</c><c>l</c><c>e</c><c>&nbsp;</c><c class=w>M</c><c>e</c><c>d</c><c>i</c><c>a</c><c>.</c><c>.</c><c>.</c></i></div>
<div class="a r" style="left:475px;top:551px"><i><c class=u>R</c><c>e</c><c>t</c><c>.</c><c>.</c><c>.</c></i></div>
<div class="a r" style="left:573px;top:551px">手动</div>
<div class="a r" style="left:646px;top:551px">本地系统</div>
<svg class="g" style="left:344px;top:566px" width="16" height="16" viewBox="0 0 16 16"><use href="#gear"/></svg>
<div class="a r" style="left:361px;top:568px"><i><c class=u>P</c><c>r</c><c>i</c><c>n</c><c>t</c><c>&nbsp;</c><c class=u>S</c><c>p</c><c>o</c><c>o</c><c>l</c><c>e</c><c>r</c></i></div>
<div class="a r" style="left:475px;top:568px">将<i><c>.</c><c>.</c><c>.</c></i></div>
<div class="a r" style="left:524px;top:568px">已启动</div>
<div class="a r" style="left:573px;top:568px">自动</div>
<div class="a r" style="left:646px;top:568px">本地系统</div>
<svg class="g" style="left:344px;top:583px" width="16" height="16" viewBox="0 0 16 16"><use href="#gear"/></svg>
<div class="a r" style="left:361px;top:585px"><i><c class=u>P</c><c>r</c><c>o</c><c>t</c><c>e</c><c>c</c><c>t</c><c>e</c><c>d</c><c>&nbsp;</c><c class=u>S</c><c>t</c><c>o</c><c>r</c><c>a</c><c>g</c><c>e</c></i></div>
<div class="a r" style="left:475px;top:585px">提<i><c>.</c><c>.</c><c>.</c></i></div>
<div class="a r" style="left:524px;top:585px">已启动</div>
<div class="a r" style="left:573px;top:585px">自动</div>
<div class="a r" style="left:646px;top:585px">本地系统</div>
<svg class="g" style="left:344px;top:600px" width="16" height="16" viewBox="0 0 16 16"><use href="#gear"/></svg>
<div class="a r" style="left:361px;top:602px"><i><c class=u>Q</c><c>o</c><c class=u>S</c><c>&nbsp;</c><c class=u>R</c><c class=u>S</c><c class=u>V</c><c class=u>P</c></i></div>
<div class="a r" style="left:475px;top:602px">为<i><c>.</c><c>.</c><c>.</c></i></div>
<div class="a r" style="left:573px;top:602px">手动</div>
<div class="a r" style="left:646px;top:602px">本地系统</div>
<svg class="g" style="left:344px;top:617px" width="16" height="16" viewBox="0 0 16 16"><use href="#gear"/></svg>
<div class="a r" style="left:361px;top:619px"><i><c class=u>R</c><c>e</c><c class=w>m</c><c>o</c><c>t</c><c>e</c><c>&nbsp;</c><c class=u>A</c><c>c</c><c>c</c><c>e</c><c>s</c><c>s</c><c>&nbsp;</c><c>.</c><c>.</c><c>.</c></i></div>
<div class="a r" style="left:475px;top:619px">无<i><c>.</c><c>.</c><c>.</c></i></div>
<div class="a r" style="left:573px;top:619px">手动</div>
<div class="a r" style="left:646px;top:619px">本地系统</div>
<svg class="g" style="left:344px;top:634px" width="16" height="16" viewBox="0 0 16 16"><use href="#gear"/></svg>
<div class="a r" style="left:361px;top:636px"><i><c class=u>R</c><c>e</c><c class=w>m</c><c>o</c><c>t</c><c>e</c><c>&nbsp;</c><c class=u>A</c><c>c</c><c>c</c><c>e</c><c>s</c><c>s</c><c>&nbsp;</c><c>.</c><c>.</c><c>.</c></i></div>
<div class="a r" style="left:475px;top:636px">创<i><c>.</c><c>.</c><c>.</c></i></div>
<div class="a r" style="left:524px;top:636px">已启动</div>
<div class="a r" style="left:573px;top:636px">手动</div>
<div class="a r" style="left:646px;top:636px">本地系统</div>
<svg class="g" style="left:344px;top:651px" width="16" height="16" viewBox="0 0 16 16"><use href="#gear"/></svg>
<div class="a r" style="left:361px;top:653px"><i><c class=u>R</c><c>e</c><c class=w>m</c><c>o</c><c>t</c><c>e</c><c>&nbsp;</c><c class=u>D</c><c>e</c><c>s</c><c>k</c><c>t</c><c>o</c><c>p</c><c>.</c><c>.</c><c>.</c></i></div>
<div class="a r" style="left:475px;top:653px">管<i><c>.</c><c>.</c><c>.</c></i></div>
<div class="a r" style="left:573px;top:653px">手动</div>
<div class="a r" style="left:646px;top:653px">本地系统</div>
<svg class="g" style="left:344px;top:668px" width="16" height="16" viewBox="0 0 16 16"><use href="#gear"/></svg>
<div class="a r" style="left:361px;top:670px"><i><c class=u>R</c><c>e</c><c class=w>m</c><c>o</c><c>t</c><c>e</c><c>&nbsp;</c><c class=u>P</c><c>a</c><c>c</c><c>k</c><c>e</c><c>t</c><c>&nbsp;</c><c>.</c><c>.</c><c>.</c></i></div>
<div class="a r" style="left:475px;top:670px"><i><c class=u>A</c><c>l</c><c>l</c><c>.</c><c>.</c><c>.</c></i></div>
<div class="a r" style="left:573px;top:670px">手动</div>
<div class="a r" style="left:646px;top:670px">本地系统</div>
<svg class="g" style="left:344px;top:685px" width="16" height="16" viewBox="0 0 16 16"><use href="#gear"/></svg>
<div class="a r" style="left:361px;top:687px"><i><c class=u>R</c><c>e</c><c class=w>m</c><c>o</c><c>t</c><c>e</c><c>&nbsp;</c><c class=u>P</c><c>r</c><c>o</c><c>c</c><c>e</c><c>d</c><c>u</c><c>.</c><c>.</c><c>.</c></i></div>
<div class="a r" style="left:475px;top:687px">提<i><c>.</c><c>.</c><c>.</c></i></div>
<div class="a r" style="left:524px;top:687px">已启动</div>
<div class="a r" style="left:573px;top:687px">自动</div>
<div class="a r" style="left:646px;top:687px">网络服务</div>
<svg class="g" style="left:344px;top:702px" width="16" height="16" viewBox="0 0 16 16"><use href="#gear"/></svg>
<div class="a r" style="left:361px;top:704px"><i><c class=u>R</c><c>e</c><c class=w>m</c><c>o</c><c>t</c><c>e</c><c>&nbsp;</c><c class=u>P</c><c>r</c><c>o</c><c>c</c><c>e</c><c>d</c><c>u</c><c>.</c><c>.</c><c>.</c></i></div>
<div class="a r" style="left:475px;top:704px">管<i><c>.</c><c>.</c><c>.</c></i></div>
<div class="a r" style="left:573px;top:704px">手动</div>
<div class="a r" style="left:646px;top:704px">网络服务</div>
<svg class="g" style="left:344px;top:719px" width="16" height="16" viewBox="0 0 16 16"><use href="#gear"/></svg>
<div class="a r" style="left:361px;top:721px"><i><c class=u>R</c><c>e</c><c class=w>m</c><c>o</c><c>t</c><c>e</c><c>&nbsp;</c><c class=u>R</c><c>e</c><c>g</c><c>i</c><c>s</c><c>t</c><c>r</c><c>y</c></i></div>
<div class="a r" style="left:475px;top:721px">使<i><c>.</c><c>.</c><c>.</c></i></div>
<div class="a r" style="left:524px;top:721px">已启动</div>
<div class="a r" style="left:573px;top:721px">自动</div>
<div class="a r" style="left:646px;top:721px">本地服务</div>
<svg class="g" style="left:344px;top:736px" width="16" height="16" viewBox="0 0 16 16"><use href="#gear"/></svg>
<div class="a r" style="left:361px;top:738px"><i><c class=u>R</c><c>e</c><c class=w>m</c><c>o</c><c>v</c><c>a</c><c>b</c><c>l</c><c>e</c><c>&nbsp;</c><c class=u>S</c><c>t</c><c>o</c><c>r</c><c>a</c><c>g</c><c>e</c></i></div>
<div class="a r" style="left:573px;top:738px">手动</div>
<div class="a r" style="left:646px;top:738px">本地系统</div>
<svg class="g" style="left:344px;top:753px" width="16" height="16" viewBox="0 0 16 16"><use href="#gear"/></svg>
<div class="a r" style="left:361px;top:755px"><i><c class=u>R</c><c>o</c><c>u</c><c>t</c><c>i</c><c>n</c><c>g</c><c>&nbsp;</c><c>a</c><c>n</c><c>d</c><c>&nbsp;</c><c class=u>R</c><c>e</c><c>.</c><c>.</c><c>.</c></i></div>
<div class="a r" style="left:475px;top:755px">在<i><c>.</c><c>.</c><c>.</c></i></div>
<div class="a r" style="left:573px;top:755px">已禁用</div>
<div class="a r" style="left:646px;top:755px">本地系统</div>
<svg class="g" style="left:344px;top:770px" width="16" height="16" viewBox="0 0 16 16"><use href="#gear"/></svg>
<div class="a r" style="left:361px;top:772px"><i><c class=u>S</c><c>e</c><c>c</c><c>o</c><c>n</c><c>d</c><c>a</c><c>r</c><c>y</c><c>&nbsp;</c><c class=u>L</c><c>o</c><c>g</c><c>o</c><c>n</c></i></div>
<div class="a r" style="left:475px;top:772px">启<i><c>.</c><c>.</c><c>.</c></i></div>
<div class="a r" style="left:524px;top:772px">已启动</div>
<div class="a r" style="left:573px;top:772px">自动</div>
<div class="a r" style="left:646px;top:772px">本地系统</div>
<svg class="g" style="left:344px;top:787px" width="16" height="16" viewBox="0 0 16 16"><use href="#gear"/></svg>
<div class="a r" style="left:361px;top:789px"><i><c class=u>S</c><c>e</c><c>c</c><c>u</c><c>r</c><c>i</c><c>t</c><c>y</c><c>&nbsp;</c><c class=u>A</c><c>c</c><c>c</c><c>o</c><c>u</c><c>.</c><c>.</c><c>.</c></i></div>
<div class="a r" style="left:475px;top:789px">存<i><c>.</c><c>.</c><c>.</c></i></div>
<div class="a r" style="left:524px;top:789px">已启动</div>
<div class="a r" style="left:573px;top:789px">自动</div>
<div class="a r" style="left:646px;top:789px">本地系统</div>
<svg class="g" style="left:344px;top:804px" width="16" height="16" viewBox="0 0 16 16"><use href="#gear"/></svg>
<div class="a r" style="left:361px;top:806px"><i><c class=u>S</c><c>e</c><c>c</c><c>u</c><c>r</c><c>i</c><c>t</c><c>y</c><c>&nbsp;</c><c class=u>C</c><c>e</c><c>n</c><c>t</c><c>e</c><c>r</c></i></div>
<div class="a r" style="left:475px;top:806px">监<i><c>.</c><c>.</c><c>.</c></i></div>
<div class="a r" style="left:524px;top:806px">已启动</div>
<div class="a r" style="left:573px;top:806px">自动</div>
<div class="a r" style="left:646px;top:806px">本地系统</div>
<svg class="g" style="left:344px;top:821px" width="16" height="16" viewBox="0 0 16 16"><use href="#gear"/></svg>
<div class="a r" style="left:361px;top:823px"><i><c class=u>S</c><c>e</c><c>r</c><c>v</c><c>e</c><c>r</c></i></div>
<div class="a r" style="left:475px;top:823px">支<i><c>.</c><c>.</c><c>.</c></i></div>
<div class="a r" style="left:524px;top:823px">已启动</div>
<div class="a r" style="left:573px;top:823px">自动</div>
<div class="a r" style="left:646px;top:823px">本地系统</div>
<svg class="g" style="left:344px;top:838px" width="16" height="16" viewBox="0 0 16 16"><use href="#gear"/></svg>
<div class="a r" style="left:361px;top:840px"><i><c class=u>S</c><c>h</c><c>e</c><c>l</c><c>l</c><c>&nbsp;</c><c class=u>H</c><c>a</c><c>r</c><c>d</c><c class=w>w</c><c>a</c><c>r</c><c>e</c><c>.</c><c>.</c><c>.</c></i></div>
<div class="a r" style="left:475px;top:840px">为<i><c>.</c><c>.</c><c>.</c></i></div>
<div class="a r" style="left:524px;top:840px">已启动</div>
<div class="a r" style="left:573px;top:840px">自动</div>
<div class="a r" style="left:646px;top:840px">本地系统</div>
<svg class="g" style="left:344px;top:855px" width="16" height="16" viewBox="0 0 16 16"><use href="#gear"/></svg>
<div class="a r" style="left:361px;top:857px"><i><c class=u>S</c><c class=w>m</c><c>a</c><c>r</c><c>t</c><c>&nbsp;</c><c class=u>C</c><c>a</c><c>r</c><c>d</c></i></div>
<div class="a r" style="left:475px;top:857px">管<i><c>.</c><c>.</c><c>.</c></i></div>
<div class="a r" style="left:573px;top:857px">手动</div>
<div class="a r" style="left:646px;top:857px">本地服务</div>
<svg class="g" style="left:344px;top:872px" width="16" height="16" viewBox="0 0 16 16"><use href="#gear"/></svg>
<div class="a r" style="left:361px;top:874px"><i><c class=u>S</c><c class=u>S</c><c class=u>D</c><c class=u>P</c><c>&nbsp;</c><c class=u>D</c><c>i</c><c>s</c><c>c</c><c>o</c><c>v</c><c>e</c><c>r</c><c>y</c><c>.</c><c>.</c><c>.</c></i></div>
<div class="a r" style="left:475px;top:874px">启<i><c>.</c><c>.</c><c>.</c></i></div>
<div class="a r" style="left:524px;top:874px">已启动</div>
<div class="a r" style="left:573px;top:874px">手动</div>
<div class="a r" style="left:646px;top:874px">本地服务</div>
<svg class="g" style="left:344px;top:889px" width="16" height="16" viewBox="0 0 16 16"><use href="#gear"/></svg>
<div class="a r" style="left:361px;top:891px"><i><c class=u>S</c><c>y</c><c>s</c><c>t</c><c>e</c><c class=w>m</c><c>&nbsp;</c><c class=u>E</c><c>v</c><c>e</c><c>n</c><c>t</c><c>&nbsp;</c><c class=u>N</c><c>.</c><c>.</c><c>.</c></i></div>
<div class="a r" style="left:475px;top:891px">跟<i><c>.</c><c>.</c><c>.</c></i></div>
<div class="a r" style="left:524px;top:891px">已启动</div>
<div class="a r" style="left:573px;top:891px">自动</div>
<div class="a r" style="left:646px;top:891px">本地系统</div>
<svg class="g" style="left:344px;top:906px" width="16" height="16" viewBox="0 0 16 16"><use href="#gear"/></svg>
<div class="a r" style="left:361px;top:908px"><i><c class=u>S</c><c>y</c><c>s</c><c>t</c><c>e</c><c class=w>m</c><c>&nbsp;</c><c class=u>R</c><c>e</c><c>s</c><c>t</c><c>o</c><c>r</c><c>e</c><c>.</c><c>.</c><c>.</c></i></div>
<div class="a r" style="left:475px;top:908px">执<i><c>.</c><c>.</c><c>.</c></i></div>
<div class="a r" style="left:524px;top:908px">已启动</div>
<div class="a r" style="left:573px;top:908px">自动</div>
<div class="a r" style="left:646px;top:908px">本地系统</div>
<svg class="g" style="left:344px;top:923px" width="16" height="16" viewBox="0 0 16 16"><use href="#gear"/></svg>
<div class="a r" style="left:361px;top:925px"><i><c class=u>T</c><c>a</c><c>s</c><c>k</c><c>&nbsp;</c><c class=u>S</c><c>c</c><c>h</c><c>e</c><c>d</c><c>u</c><c>l</c><c>e</c><c>r</c></i></div>
<div class="a r" style="left:475px;top:925px">使<i><c>.</c><c>.</c><c>.</c></i></div>
<div class="a r" style="left:524px;top:925px">已启动</div>
<div class="a r" style="left:573px;top:925px">自动</div>
<div class="a r" style="left:646px;top:925px">本地系统</div>
<div class="a" style="left:875px;top:364px;width:410px;height:450px;background:#0831D9;border-radius:8px 8px 0 0"></div>
<div class="a" style="left:875px;top:364px;width:410px;height:29px;border-radius:8px 8px 0 0;background:linear-gradient(#0A4EE0 0,#0A4EE0 1px,#3D95FF 1px,#2A86FC 3px,#0A64EA 5px,#0054DF 8px,#0055E2 15px,#005EEF 20px,#0067FF 24px,#0066FD 26px,#0046D5 27px,#003CCB 29px)"></div>
<div class="a" style="left:875px;top:393px;width:410px;height:421px;background:linear-gradient(90deg,#0028E0 0 1px,#1A6FF8 1px 2px,#0050E8 2px 3px,#FFF8DC 3px 4px,#ECE9D8 4px 406px,#FFF8DC 406px 407px,#0A3FF0 407px 408px,#0020B0 408px 409px,#00008A 409px 410px)"></div>
<div class="a" style="left:878px;top:810px;width:404px;height:1px;background:#FFF8DC"></div>
<div class="a" style="left:875px;top:811px;width:410px;height:3px;background:linear-gradient(#0A4CF8 0 1px,#00209A 1px 2px,#000080 2px 3px)"></div>
<div class="a bd" style="left:883px;top:373px;color:#fff"><i style="letter-spacing:0.5px"><c class=u>T</c><c>e</c><c>l</c><c>n</c><c>e</c><c>t</c></i></div><div class="a bd" style="left:939px;top:373px;color:#fff">的属性<i><c>(</c></i>本地计算机<i><c>)</c></i></div>
<div class="a" style="left:1236px;top:369px;width:21px;height:21px;border:1px solid #fff;border-radius:3px;background:radial-gradient(circle at 30% 25%,#7AA6FF,#2A6BF0 70%,#1F5FE6)"></div>
<div class="a" style="left:1241px;top:371px;color:#fff;font-size:17px;line-height:17px;font-weight:bold">?</div>
<div class="a" style="left:1259px;top:369px;width:21px;height:21px;border:1px solid #fff;border-radius:3px;background:radial-gradient(circle at 30% 25%,#F09B7E,#E2532C 60%,#C8401A)"></div>
<svg class="g" style="left:1264px;top:374px" width="11" height="11" viewBox="0 0 11 11"><path d="M1 1L10 10M10 1L1 10" stroke="#fff" stroke-width="2.2"/></svg>
<div class="a" style="left:884px;top:418px;width:390px;height:358px;border:1px solid #919B9C;background:linear-gradient(#FCFCFE,#F4F3EE)"></div>
<div class="a" style="left:935px;top:401px;width:46px;height:18px;border:1px solid #919B9C;border-bottom:none;border-radius:3px 3px 0 0;background:linear-gradient(#FFFFFF,#ECEBE5 80%,#D8D2BD)"></div>
<div class="a" style="left:940px;top:404px">登录</div>
<div class="a" style="left:982px;top:401px;width:47px;height:18px;border:1px solid #919B9C;border-bottom:none;border-radius:3px 3px 0 0;background:linear-gradient(#FFFFFF,#ECEBE5 80%,#D8D2BD)"></div>
<div class="a" style="left:987px;top:404px">恢复</div>
<div class="a" style="left:1030px;top:401px;width:58px;height:18px;border:1px solid #919B9C;border-bottom:none;border-radius:3px 3px 0 0;background:linear-gradient(#FFFFFF,#ECEBE5 80%,#D8D2BD)"></div>
<div class="a" style="left:1035px;top:404px">依存关系</div>
<div class="a" style="left:884px;top:399px;width:52px;height:21px;border:1px solid #919B9C;border-bottom:none;border-radius:3px 3px 0 0;background:#FCFCFE"></div>
<div class="a" style="left:884px;top:399px;width:52px;height:3px;background:#F4A62A;border-radius:3px 3px 0 0;border-top:1px solid #E68B2C"></div>
<div class="a" style="left:891px;top:403px">常规</div>
<div class="a" style="left:899px;top:435px">服务名称:</div>
<div class="a" style="left:989px;top:436px"><i><c class=u>T</c><c>l</c><c>n</c><c>t</c><c class=u>S</c><c>v</c><c>r</c></i></div>
<div class="a" style="left:899px;top:467px">显示名称<i><c>(</c><c class=u><u>N</u></c><c>)</c><c>:</c></i></div>
<div class="a" style="left:989px;top:461px;width:266px;height:22px;border-top:1px solid #ACA899;border-left:1px solid #ACA899"></div>
<div class="a" style="left:990px;top:463px"><i><c class=u>T</c><c>e</c><c>l</c><c>n</c><c>e</c><c>t</c></i></div>
<div class="a" style="left:899px;top:495px">描述<i><c>(</c><c class=u><u>D</u></c><c>)</c><c>:</c></i></div>
<div class="a" style="left:989px;top:491px;width:266px;height:22px;border-top:1px solid #ACA899;border-left:1px solid #ACA899"></div>
<div class="a" style="left:990px;top:492px">允许远程用户登录到此计算机并运行程序，并</div>
<div class="a" style="left:1240px;top:493px;width:14px;height:9px;border:1px solid #B9CDF5;border-radius:2px;background:linear-gradient(#DCE6FC,#B7CCF8)"></div>
<svg class="g" style="left:1242px;top:493px" width="10" height="8" viewBox="0 0 9 8"><path d="M2 5L4.5 2.5L7 5" fill="#4D6185"/></svg>
<div class="a" style="left:1240px;top:504px;width:14px;height:9px;border:1px solid #B9CDF5;border-radius:2px;background:linear-gradient(#DCE6FC,#B7CCF8)"></div>
<svg class="g" style="left:1242px;top:504px" width="10" height="8" viewBox="0 0 9 8"><path d="M2 2.5L4.5 5L7 2.5" fill="#4D6185"/></svg>
<div class="a" style="left:899px;top:520px">可执行文件的路径<i><c>(</c><c class=u><u>H</u></c><c>)</c><c>:</c></i></div>
<div class="a" style="left:899px;top:543px;width:356px;height:19px;border-top:1px solid #ACA899;border-left:1px solid #ACA899"></div>
<div class="a" style="left:900px;top:546px"><i><c class=u>C</c><c>:</c><c>\</c><c class=w>W</c><c class=u>I</c><c class=u>N</c><c class=u>D</c><c class=u>O</c><c class=w>W</c><c class=u>S</c><c>\</c><c>s</c><c>y</c><c>s</c><c>t</c><c>e</c><c class=w>m</c><c>3</c><c>2</c><c>\</c><c>t</c><c>l</c><c>n</c><c>t</c><c>s</c><c>v</c><c>r</c><c>.</c><c>e</c><c>x</c><c>e</c></i></div>
<div class="a" style="left:899px;top:577px">启动类型<i><c>(</c><c class=u><u>E</u></c><c>)</c><c>:</c></i></div>
<div class="a" style="left:899px;top:618px;width:356px;height:1px;background:#D0D0BF"></div>
<div class="a" style="left:899px;top:630px">服务状态:</div>
<div class="a" style="left:990px;top:630px">已启动</div>
<div class="a" style="left:989px;top:575px;width:267px;height:20px;border:1px solid #7F9DB9;background:#fff"></div>
<div class="a" style="left:995px;top:579px">自动</div>
<div class="a" style="left:1238px;top:577px;width:16px;height:16px;border:1px solid #B9CDF5;border-radius:2px;background:linear-gradient(#DCE6FC,#B0C6F5)"></div>
<svg class="g" style="left:1241px;top:581px" width="10" height="8" viewBox="0 0 10 8"><path d="M1 1.5L5 5.5L9 1.5" fill="none" stroke="#4D6185" stroke-width="2"/></svg>
<div class="a" style="left:989px;top:595px;width:267px;height:38px;border:1px solid #000;background:#fff"></div>
<div class="a" style="left:990px;top:596px;width:265px;height:12px;background:#316AC5;outline:1px dotted #E0A040;outline-offset:-1px"></div>
<div class="a" style="left:991px;top:596px;color:#fff">自动</div>
<div class="a" style="left:991px;top:607px">手动</div>
<div class="a" style="left:991px;top:619px">已禁用</div>
<div class="a" style="left:900px;top:655px;width:82px;height:21px;border:1px solid #C9C7BA;border-radius:3px;background:#F4F3EE"></div>
<div class="a" style="left:899px;top:658px;width:82px;text-align:center;color:#ACA899">启动<i><c>(</c><c class=u><u>S</u></c><c>)</c></i></div>
<div class="a" style="left:990px;top:655px;width:82px;height:21px;border:1px solid #003C74;border-radius:3px;background:linear-gradient(#FFFFFF,#F0F0EA 60%,#E3E2DA);box-shadow:inset 0 -2px 0 #D6D0C5;"></div>
<div class="a" style="left:989px;top:658px;width:82px;text-align:center;color:#000">停止<i><c>(</c><c class=u><u>T</u></c><c>)</c></i></div>
<div class="a" style="left:1080px;top:655px;width:84px;height:21px;border:1px solid #003C74;border-radius:3px;background:linear-gradient(#FFFFFF,#F0F0EA 60%,#E3E2DA);box-shadow:inset 0 -2px 0 #D6D0C5;"></div>
<div class="a" style="left:1079px;top:658px;width:84px;text-align:center;color:#000">暂停<i><c>(</c><c class=u><u>P</u></c><c>)</c></i></div>
<div class="a" style="left:1173px;top:655px;width:82px;height:21px;border:1px solid #C9C7BA;border-radius:3px;background:#F4F3EE"></div>
<div class="a" style="left:1172px;top:658px;width:82px;text-align:center;color:#ACA899">恢复<i><c>(</c><c class=u><u>R</u></c><c>)</c></i></div>
<div class="a" style="left:899px;top:689px">当从此处启动服务时，您可指定所适用的启动参数。</div>
<div class="a" style="left:899px;top:731px;color:#ACA899">启动参数<i><c>(</c><c class=w><u>M</u></c><c>)</c><c>:</c></i></div>
<div class="a" style="left:1007px;top:726px;width:249px;height:23px;border:1px solid #7F9DB9;background:#F4F3EE"></div>
<div class="a" style="left:1040px;top:785px;width:73px;height:19px;border:1px solid #003C74;border-radius:3px;background:linear-gradient(#FFFFFF,#F0F0EA 60%,#E3E2DA);box-shadow:inset 0 -2px 0 #6F8EEC,inset 0 2px 0 #CEE7FF,inset 0 0 0 2px #A8C8F8;"></div>
<div class="a" style="left:1039px;top:788px;width:73px;text-align:center;color:#000">确定</div>
<div class="a" style="left:1121px;top:785px;width:73px;height:19px;border:1px solid #003C74;border-radius:3px;background:linear-gradient(#FFFFFF,#F0F0EA 60%,#E3E2DA);box-shadow:inset 0 -2px 0 #D6D0C5;"></div>
<div class="a" style="left:1120px;top:788px;width:73px;text-align:center;color:#000">取消</div>
<div class="a" style="left:1202px;top:785px;width:73px;height:19px;border:1px solid #C9C7BA;border-radius:3px;background:#F4F3EE"></div>
<div class="a" style="left:1201px;top:788px;width:73px;text-align:center;color:#ACA899">应用<i><c>(</c><c class=u><u>A</u></c><c>)</c></i></div>
</body></html>
